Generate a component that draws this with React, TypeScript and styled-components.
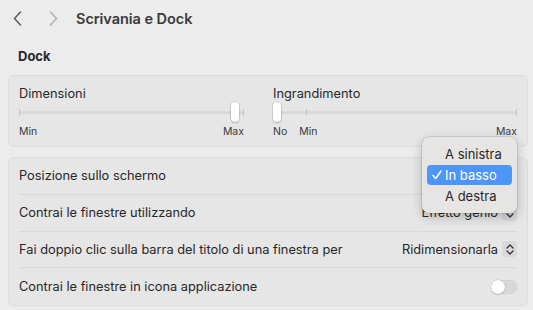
import React from "react";
import styled, { createGlobalStyle } from "styled-components";

const Global = createGlobalStyle`
  html, body { margin: 0; padding: 0; background: #ececec; }
  body { font-family: Inter, "Liberation Sans", sans-serif; color: #262626; -webkit-font-smoothing: antialiased; }
`;

const Page = styled.div`
  position: relative;
  width: 533px;
  height: 310px;
  background: #ececec;
  overflow: hidden;
`;

const Header = styled.div`
  display: flex;
  align-items: center;
  height: 37px;
  padding-left: 10px;
`;

const NavButton = styled.div<{ $dim?: boolean }>`
  width: 14px;
  height: 20px;
  display: flex;
  align-items: center;
  justify-content: center;
  margin-right: ${(p) => (p.$dim ? "16px" : "22px")};
  color: ${(p) => (p.$dim ? "#b4b4b4" : "#5e5e5e")};
`;

const Title = styled.div`
  font-size: 14.5px;
  font-weight: 600;
  color: #3a3a3a;
  letter-spacing: -0.05px;
`;

const Content = styled.div`
  padding: 0 5px 0 8px;
`;

const SectionLabel = styled.div`
  font-size: 13px;
  font-weight: 700;
  color: #2a2a2a;
  padding-left: 10px;
  height: 38px;
  display: flex;
  align-items: center;
`;

const Card = styled.div`
  background: #e6e6e6;
  border: 1px solid #dcdcdc;
  border-radius: 6px;
  box-sizing: border-box;
`;

const SliderCard = styled(Card)`
  height: 72px;
  display: flex;
  gap: 29px;
  padding: 9px 10px 0 10px;
`;

const SliderCol = styled.div<{ $w?: number }>`
  display: flex;
  flex-direction: column;
  ${(p) => (p.$w ? `width: ${p.$w}px;` : "flex: 1;")}
`;

const SliderLabel = styled.div`
  font-size: 12.8px;
  height: 18px;
  line-height: 18px;
`;

const Track = styled.div`
  position: relative;
  height: 20px;
  margin-top: -1px;
`;

const TrackLine = styled.div`
  position: absolute;
  left: 0;
  right: 0;
  top: 9px;
  height: 3px;
  border-radius: 2px;
  background: #d9d9d9;
`;

const Tick = styled.div`
  position: absolute;
  top: 7px;
  width: 1px;
  height: 7px;
  background: #c4c4c4;
`;

const Thumb = styled.div`
  position: absolute;
  top: 0;
  width: 8px;
  height: 20px;
  border-radius: 5px;
  background: #ffffff;
  box-shadow: 0 0 0 0.5px rgba(0, 0, 0, 0.18), 0 1px 2px rgba(0, 0, 0, 0.2);
`;

const ScaleRow = styled.div`
  display: flex;
  justify-content: space-between;
  font-size: 10.5px;
  color: #3a3a3a;
  height: 16px;
  line-height: 16px;
  margin-top: 2px;
`;

const ScaleLeft = styled.div`
  display: flex;
  gap: 12px;
`;

const ListCard = styled(Card)`
  margin-top: 10px;
  display: flex;
  flex-direction: column;
`;

const Row = styled.div<{ $last?: boolean }>`
  height: 36.75px;
  margin: 0 10px;
  display: flex;
  align-items: center;
  justify-content: space-between;
  font-size: 12.8px;
  border-bottom: ${(p) => (p.$last ? "none" : "1px solid #d9d9d9")};
  box-sizing: border-box;
`;

const PopupValue = styled.div`
  display: flex;
  align-items: center;
  gap: 4px;
  font-size: 12.8px;
`;

const Stepper = styled.div`
  width: 15px;
  height: 16px;
  border-radius: 4px;
  background: #d9d9d9;
  display: flex;
  align-items: center;
  justify-content: center;
`;

const Toggle = styled.div`
  width: 26px;
  height: 14px;
  border-radius: 7px;
  background: #d8d8d8;
  position: relative;
  box-shadow: inset 0 0 0 0.5px rgba(0, 0, 0, 0.06);
`;

const Knob = styled.div`
  position: absolute;
  left: 0;
  top: 0;
  width: 14px;
  height: 14px;
  border-radius: 50%;
  background: #fff;
  box-shadow: 0 0 0 0.5px rgba(0, 0, 0, 0.15), 0 1px 1px rgba(0, 0, 0, 0.15);
`;

const Menu = styled.div`
  position: absolute;
  left: 422px;
  top: 137px;
  width: 95px;
  height: 76px;
  box-sizing: border-box;
  background: #e7e5e4;
  border-radius: 7px;
  box-shadow: 0 0 0 0.5px rgba(0, 0, 0, 0.18), 0 4px 12px rgba(0, 0, 0, 0.22);
  padding: 7px 5px;
  display: flex;
  flex-direction: column;
`;

const MenuItem = styled.div<{ $active?: boolean }>`
  height: 21.5px;
  border-radius: 4px;
  display: flex;
  align-items: center;
  font-size: 13px;
  padding-left: ${(p) => (p.$active ? "5px" : "18px")};
  gap: 3px;
  background: ${(p) => (p.$active ? "#4d96f7" : "transparent")};
  color: ${(p) => (p.$active ? "#ffffff" : "#262626")};
`;

const Chevron = ({ dir }: { dir: "left" | "right" }) => (
  <svg width="9" height="15" viewBox="0 0 9 15" fill="none">
    <path
      d={dir === "left" ? "M7.5 1 L1.5 7.5 L7.5 14" : "M1.5 1 L7.5 7.5 L1.5 14"}
      stroke="currentColor"
      strokeWidth="1.6"
      strokeLinecap="round"
      strokeLinejoin="round"
    />
  </svg>
);

const UpDown = () => (
  <svg width="8" height="11" viewBox="0 0 8 11" fill="none">
    <path d="M1 4 L4 1 L7 4 M1 7 L4 10 L7 7" stroke="#333" strokeWidth="1.3" strokeLinecap="round" strokeLinejoin="round" />
  </svg>
);

const Check = () => (
  <svg width="10" height="10" viewBox="0 0 10 10" fill="none">
    <path d="M1 5.5 L3.8 8.5 L9 1" stroke="#fff" strokeWidth="1.5" strokeLinecap="round" strokeLinejoin="round" />
  </svg>
);

export default function App() {
  return (
    <Page>
      <Global />
      <Header>
        <NavButton>
          <Chevron dir="left" />
        </NavButton>
        <NavButton $dim>
          <Chevron dir="right" />
        </NavButton>
        <Title>Scrivania e Dock</Title>
      </Header>
      <Content>
        <SectionLabel>Dock</SectionLabel>
        <SliderCard>
          <SliderCol $w={225}>
            <SliderLabel>Dimensioni</SliderLabel>
            <Track>
              <TrackLine />
              <Tick style={{ left: 0 }} />
              <Tick style={{ left: 224 }} />
              <Thumb style={{ left: 212 }} />
            </Track>
            <ScaleRow>
              <span>Min</span>
              <span>Max</span>
            </ScaleRow>
          </SliderCol>
          <SliderCol>
            <SliderLabel>Ingrandimento</SliderLabel>
            <Track>
              <TrackLine />
              <Tick style={{ left: 33 }} />
              <Tick style={{ right: 0 }} />
              <Thumb style={{ left: 0 }} />
            </Track>
            <ScaleRow>
              <ScaleLeft>
                <span>No</span>
                <span>Min</span>
              </ScaleLeft>
              <span>Max</span>
            </ScaleRow>
          </SliderCol>
        </SliderCard>
        <ListCard>
          <Row>
            <span>Posizione sullo schermo</span>
          </Row>
          <Row>
            <span>Contrai le finestre utilizzando</span>
            <PopupValue>
              <span>Effetto genio</span>
              <Stepper>
                <UpDown />
              </Stepper>
            </PopupValue>
          </Row>
          <Row>
            <span>Fai doppio clic sulla barra del titolo di una finestra per</span>
            <PopupValue>
              <span>Ridimensionarla</span>
              <Stepper>
                <UpDown />
              </Stepper>
            </PopupValue>
          </Row>
          <Row $last>
            <span>Contrai le finestre in icona applicazione</span>
            <Toggle>
              <Knob />
            </Toggle>
          </Row>
        </ListCard>
      </Content>
      <Menu>
        <MenuItem>A sinistra</MenuItem>
        <MenuItem $active>
          <Check />
          <span>In basso</span>
        </MenuItem>
        <MenuItem>A destra</MenuItem>
      </Menu>
    </Page>
  );
}
